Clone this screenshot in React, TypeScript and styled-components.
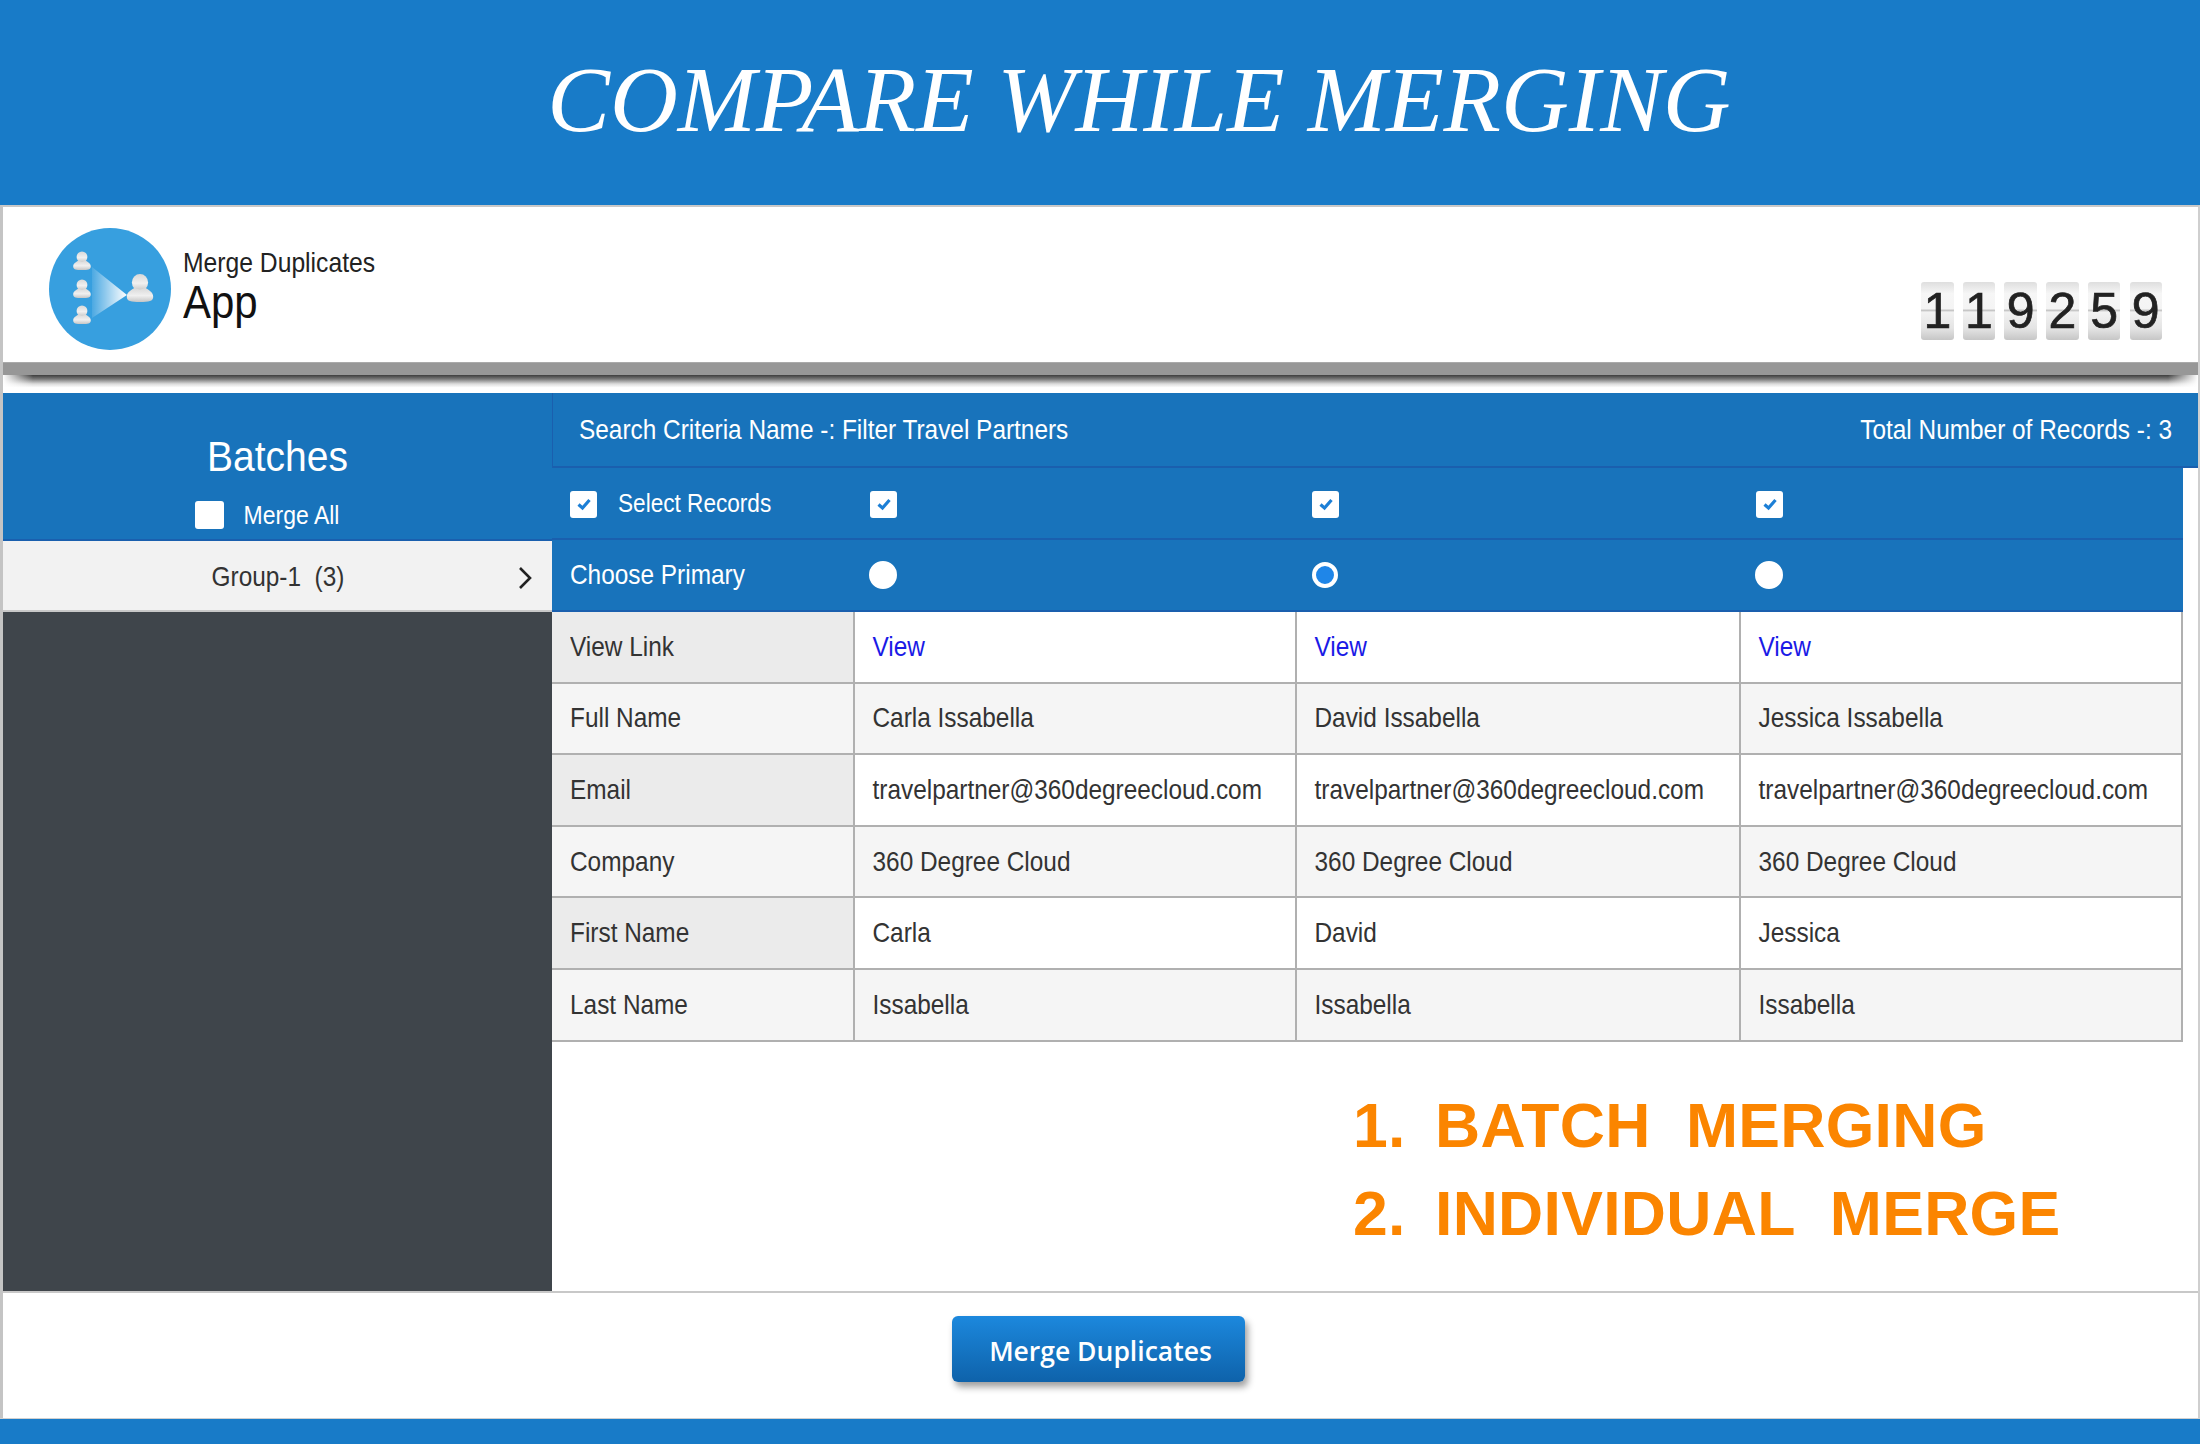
import React from "react";
import styled, { createGlobalStyle } from "styled-components";

const Global = createGlobalStyle`
  html, body { margin: 0; padding: 0; background: #fff; }
  body { font-family: "Liberation Sans", Arial, sans-serif; color: #333; }
  * { box-sizing: border-box; }
`;

const Page = styled.div`
  width: 2200px;
  height: 1444px;
  display: flex;
  flex-direction: column;
  overflow: hidden;
`;
const TitleBar = styled.header`
  height: 205px;
  flex: none;
  background: #187bc8;
  display: flex;
  align-items: center;
  justify-content: center;
  padding-left: 78px;
`;
const Title = styled.h1`
  margin: 0 0 7px;
  font: italic 400 94px/1 "Liberation Serif", serif;
  color: #fff;
`;
const Frame = styled.div`
  flex: 1;
  display: flex;
  flex-direction: column;
  border-left: 3px solid #c4c4c4;
  border-right: 2px solid #cfcfcf;
  border-top: 2px solid #c8c8c8;
`;
const AppHeader = styled.div`
  height: 155px;
  flex: none;
  display: flex;
  justify-content: space-between;
  padding: 21px 36px 22px 46px;
`;
const Brand = styled.div`
  display: flex;
  gap: 12px;
`;
const BrandText = styled.div`
  display: flex;
  flex-direction: column;
  padding-top: 20px;
  color: #111;
`;
const Tall = styled.span`
  display: inline-block;
  transform: scaleY(1.1);
`;
const BrandSmall = styled(Tall)`
  font-size: 24.7px;
  line-height: 30px;
  color: #222;
`;
const BrandBig = styled(Tall)`
  font-size: 42px;
  line-height: 50px;
`;
const Counter = styled.div`
  align-self: flex-end;
  display: flex;
  gap: 9.2px;
`;
const Tile = styled.span`
  width: 32.5px;
  height: 58px;
  border-radius: 3px;
  background: linear-gradient(#dedede 0%, #f6f6f6 20%, #f4f4f4 46%, #c4c4c4 49%, #f2f2f2 52%, #e4e4e4 80%, #c6c6c6 100%);
  font-size: 50px;
  line-height: 58px;
  text-align: center;
  color: #222;
  -webkit-text-stroke: 0.7px #222;
`;
const GrayBar = styled.div`
  height: 13px;
  flex: none;
  background: #979797;
  border-top: 1px solid #aaa;
`;
const BarShadow = styled.div`
  height: 18px;
  flex: none;
  background:
    linear-gradient(90deg, #fff 0, rgba(255, 255, 255, 0) 30px, rgba(255, 255, 255, 0) calc(100% - 30px), #fff 100%),
    linear-gradient(#3d3d3d 0%, #777 22%, #ddd 50%, #fff 70%);
`;
const Body = styled.div`
  height: 898px;
  flex: none;
  display: flex;
`;
const Sidebar = styled.aside`
  width: 549px;
  flex: none;
  display: flex;
  flex-direction: column;
`;
const BatchHead = styled.div`
  height: 148px;
  flex: none;
  background: #1873bb;
  color: #fff;
  display: flex;
  flex-direction: column;
  align-items: center;
  padding-top: 41px;
  border-bottom: 2px solid #1a5fae;
`;
const BatchTitle = styled(Tall)`
  font-size: 39px;
  line-height: 46px;
`;
const MergeAll = styled.label`
  display: flex;
  align-items: center;
  gap: 20px;
  margin-top: 20px;
  font-size: 23px;
  line-height: 30px;
  margin-right: 21px;
`;
const GroupRow = styled.div`
  height: 71px;
  flex: none;
  display: grid;
  grid-template-columns: 1fr auto 1fr;
  align-items: center;
  background: #f2f2f2;
  border-bottom: 2px solid #c8c8c8;
  font-size: 24.4px;
  color: #333;
  white-space: pre;
  padding: 2px 0 0 1px;
`;
const GroupName = styled(Tall)`
  grid-column: 2;
`;
const Chevron = styled.svg`
  grid-column: 3;
  justify-self: end;
  width: 16px;
  height: 24px;
  margin-right: 19px;
  margin-top: 2px;
`;
const DarkFill = styled.div`
  flex: 1;
  background: #3f454b;
`;
const Main = styled.main`
  flex: 1;
  display: flex;
  flex-direction: column;
  min-width: 0;
`;
const SearchBar = styled.div`
  height: 75px;
  flex: none;
  display: flex;
  align-items: center;
  justify-content: space-between;
  padding: 0 26px 0 26px;
  background: #1873bb;
  color: #fff;
  font-size: 24.4px;
  border-left: 1px solid #1a5fae;
  border-bottom: 2px solid #1a5fae;
`;
const Grid = styled.div`
  width: 1631px;
  display: grid;
  grid-template-columns: 301px 442px 444px 444px;
  grid-template-rows: 72px 72px;
  grid-auto-rows: 71.6px;
  font-size: 24.4px;
`;
const BlueCell = styled.div<{ $last?: boolean }>`
  display: flex;
  align-items: center;
  gap: 21px;
  padding: ${(p) => (p.$last ? "0 0 0 18px" : "2px 0 0 18px")};
  background: #1873bb;
  color: #fff;
  border-bottom: 2px solid #1a5fae;
  font-size: ${(p) => (p.$last ? "24.4px" : "22.6px")};
`;
const BlueValue = styled.div<{ $pad: number; $drop?: number }>`
  display: flex;
  align-items: center;
  padding: ${(p) => p.$drop ?? 0}px 0 0 ${(p) => p.$pad}px;
  background: #1873bb;
  border-bottom: 2px solid #1a5fae;
`;
const LabelCell = styled.div<{ $odd: boolean }>`
  display: flex;
  align-items: center;
  padding-left: 18px;
  background: ${(p) => (p.$odd ? "#ebebeb" : "#f5f5f5")};
  color: #333;
  border-bottom: 2px solid #b0b0b0;
`;
const ValueCell = styled.div<{ $odd: boolean; $end?: boolean }>`
  display: flex;
  align-items: center;
  padding-left: 17.5px;
  background: ${(p) => (p.$odd ? "#fff" : "#f5f5f5")};
  color: #333;
  border-left: 2px solid #b0b0b0;
  border-bottom: 2px solid #b0b0b0;
  border-right: ${(p) => (p.$end ? "2px solid #b0b0b0" : "none")};
`;
const ViewLink = styled.a`
  color: #1a1ae6;
  text-decoration: none;
`;
const Box = styled.span<{ $big?: boolean }>`
  display: inline-flex;
  align-items: center;
  justify-content: center;
  width: ${(p) => (p.$big ? 29 : 27)}px;
  height: ${(p) => (p.$big ? 28 : 27)}px;
  flex: none;
  background: #fff;
  border-radius: 3px;
`;
const Radio = styled.span<{ $on?: boolean }>`
  display: inline-block;
  width: ${(p) => (p.$on ? 26 : 28)}px;
  height: ${(p) => (p.$on ? 26 : 28)}px;
  margin-left: ${(p) => (p.$on ? 1 : 0)}px;
  border-radius: 50%;
  background: ${(p) => (p.$on ? "#1f86e8" : "#fff")};
  border: 4px solid #fff;
`;
const Notes = styled.div`
  margin: 39px 0 0 801px;
  color: #fb8500;
  font-size: 62.5px;
  font-weight: 700;
  letter-spacing: 0.3px;
  line-height: 88.5px;
  white-space: pre;
`;
const NoteLine = styled.div`
  display: flex;
`;
const NoteNumber = styled.span`
  width: 82px;
  flex: none;
`;
const Footer = styled.div`
  flex: 1;
  border-top: 2px solid #c8c8c8;
  display: flex;
  justify-content: center;
  padding: 23px 5px 0 0;
`;
const MergeButton = styled.button`
  width: 293px;
  height: 66px;
  border: none;
  border-radius: 6px;
  padding: 4px 0 0 5px;
  background: linear-gradient(#1c88dd, #0e62aa);
  box-shadow: 3px 5px 7px rgba(0, 0, 0, 0.38);
  color: #fff;
  font: 600 26.5px "Open Sans", sans-serif;
`;
const BottomBar = styled.div`
  height: 26px;
  flex: none;
  background: #187bc8;
  border-top: 1px solid #d0d0d0;
`;

const Check = () => (
  <svg width="18" height="18" viewBox="0 0 18 18" fill="none">
    <path d="M3.5 9.5 L7.5 13 L14.5 5" stroke="#1c7fd6" strokeWidth="3.2" />
  </svg>
);

const Person = ({ x, y, s }: { x: number; y: number; s: number }) => (
  <g transform={`translate(${x} ${y}) scale(${s})`}>
    <ellipse cx="0" cy="-13" rx="5.4" ry="5.6" fill="url(#skin)" />
    <path
      d="M-8.8 -3.5 C-8.8 -7 -5.5 -8 -3.5 -9.5 C-1.5 -8 1.5 -8 3.5 -9.5 C5.5 -8 8.8 -7 8.8 -3.5 C8.8 -0.5 6 0 0 0 C-6 0 -8.8 -0.5 -8.8 -3.5 Z"
      fill="url(#skin)"
    />
  </g>
);

const Logo = () => (
  <svg width="122" height="122" viewBox="0 0 122 122">
    <defs>
      <linearGradient id="arrow" x1="0" x2="1" y1="0" y2="0">
        <stop offset="0" stopColor="#fff" stopOpacity="0.1" />
        <stop offset="1" stopColor="#fff" />
      </linearGradient>
      <linearGradient id="skin" x1="0" x2="0" y1="0" y2="1">
        <stop offset="0" stopColor="#d8d8d8" />
        <stop offset="0.55" stopColor="#f0f0f0" />
        <stop offset="1" stopColor="#c6c6c6" />
      </linearGradient>
    </defs>
    <circle cx="61" cy="61" r="61" fill="#379fdf" />
    <path d="M43 39 L78 67 L43 90 Z" fill="url(#arrow)" />
    <Person x={33} y={42} s={1} />
    <Person x={33} y={70} s={1} />
    <Person x={33} y={96} s={1} />
    <Person x={91} y={74} s={1.5} />
  </svg>
);

const rows: [string, string, string, string][] = [
  ["View Link", "View", "View", "View"],
  ["Full Name", "Carla Issabella", "David Issabella", "Jessica Issabella"],
  ["Email", "travelpartner@360degreecloud.com", "travelpartner@360degreecloud.com", "travelpartner@360degreecloud.com"],
  ["Company", "360 Degree Cloud", "360 Degree Cloud", "360 Degree Cloud"],
  ["First Name", "Carla", "David", "Jessica"],
  ["Last Name", "Issabella", "Issabella", "Issabella"],
];

export default function App() {
  return (
    <Page>
      <Global />
      <TitleBar>
        <Title>COMPARE WHILE MERGING</Title>
      </TitleBar>
      <Frame>
        <AppHeader>
          <Brand>
            <Logo />
            <BrandText>
              <BrandSmall>Merge Duplicates</BrandSmall>
              <BrandBig>App</BrandBig>
            </BrandText>
          </Brand>
          <Counter>
            {"119259".split("").map((d, i) => (
              <Tile key={i}>{d}</Tile>
            ))}
          </Counter>
        </AppHeader>
        <GrayBar />
        <BarShadow />
        <Body>
          <Sidebar>
            <BatchHead>
              <BatchTitle>Batches</BatchTitle>
              <MergeAll>
                <Box $big />
                <Tall>Merge All</Tall>
              </MergeAll>
            </BatchHead>
            <GroupRow>
              <GroupName>{"Group-1  (3)"}</GroupName>
              <Chevron viewBox="0 0 16 24" fill="none">
                <path d="M3 2 L13 12 L3 22" stroke="#222" strokeWidth="2.6" />
              </Chevron>
            </GroupRow>
            <DarkFill />
          </Sidebar>
          <Main>
            <SearchBar>
              <Tall>Search Criteria Name -: Filter Travel Partners</Tall>
              <Tall>Total Number of Records -: 3</Tall>
            </SearchBar>
            <Grid>
              <BlueCell>
                <Box>
                  <Check />
                </Box>
                <Tall>Select Records</Tall>
              </BlueCell>
              {[17, 17, 17].map((pad, i) => (
                <BlueValue key={i} $pad={pad} $drop={2}>
                  <Box>
                    <Check />
                  </Box>
                </BlueValue>
              ))}
              <BlueCell $last>
                <Tall>Choose Primary</Tall>
              </BlueCell>
              <BlueValue $pad={16}>
                <Radio />
              </BlueValue>
              <BlueValue $pad={16}>
                <Radio $on />
              </BlueValue>
              <BlueValue $pad={16}>
                <Radio />
              </BlueValue>
              {rows.map((r, i) => (
                <React.Fragment key={r[0]}>
                  <LabelCell $odd={i % 2 === 0}>
                    <Tall>{r[0]}</Tall>
                  </LabelCell>
                  {r.slice(1).map((v, j) => (
                    <ValueCell key={j} $odd={i % 2 === 0} $end={j === 2}>
                      <Tall>{i === 0 ? <ViewLink href="#">{v}</ViewLink> : v}</Tall>
                    </ValueCell>
                  ))}
                </React.Fragment>
              ))}
            </Grid>
            <Notes>
              <NoteLine>
                <NoteNumber>1.</NoteNumber>
                {"BATCH  MERGING"}
              </NoteLine>
              <NoteLine>
                <NoteNumber>2.</NoteNumber>
                {"INDIVIDUAL  MERGE"}
              </NoteLine>
            </Notes>
          </Main>
        </Body>
        <Footer>
          <MergeButton>Merge Duplicates</MergeButton>
        </Footer>
      </Frame>
      <BottomBar />
    </Page>
  );
}
